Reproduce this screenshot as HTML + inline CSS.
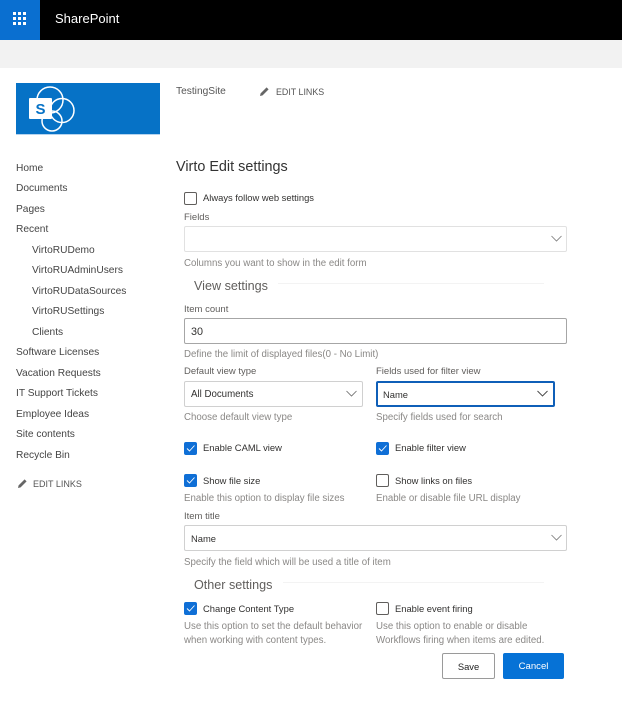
<!DOCTYPE html>
<html><head><meta charset="utf-8"><style>
html,body{margin:0;padding:0;background:#fff}
body{width:622px;height:712px;position:relative;overflow:hidden;font-family:"Liberation Sans",sans-serif;color:#333}
.t{position:absolute;white-space:nowrap;line-height:14px;font-size:10.2px}
.n{color:#444}
.h{color:#8a8886;font-size:9.7px}
.l{color:#605e5c;font-size:9.5px}
.c{color:#323130;font-size:9.4px}
.box{position:absolute;box-sizing:border-box;background:#fff;border:1px solid #c8c8c8;border-radius:2px}
.cb{position:absolute;box-sizing:border-box;width:13px;height:13px;border:1px solid #605e5c;border-radius:2px;background:#fff}
.cb.on{background:#0f6fd6;border-color:#0f6fd6}
.cb svg{position:absolute;left:0;top:0}
.chev{position:absolute}
.sec{color:#605e5c;font-size:12.6px;position:absolute;white-space:nowrap;line-height:16px}
.rule{position:absolute;height:1px;background:#f3f3f3}
</style></head><body>
<div style="position:absolute;left:0;top:0;width:622px;height:40px;background:#000"></div>
<div style="position:absolute;left:0;top:0;width:40px;height:40px;background:#0a6fd0"></div>
<svg style="position:absolute;left:13px;top:12px" width="14" height="14" fill="#fff"><rect x="0" y="0" width="3" height="3"/><rect x="5" y="0" width="3" height="3"/><rect x="10" y="0" width="3" height="3"/><rect x="0" y="5" width="3" height="3"/><rect x="5" y="5" width="3" height="3"/><rect x="10" y="5" width="3" height="3"/><rect x="0" y="10" width="3" height="3"/><rect x="5" y="10" width="3" height="3"/><rect x="10" y="10" width="3" height="3"/></svg>
<div class="t" style="left:55px;top:11px;font-size:13px;line-height:16px;color:#fff">SharePoint</div>
<div style="position:absolute;left:0;top:40px;width:622px;height:28px;background:#f2f2f2"></div>

<div style="position:absolute;left:16px;top:83px;width:144px;height:51px;background:#0672c6"></div>
<div style="position:absolute;left:16px;top:134px;width:144px;height:1px;background:#b5d3ee"></div>
<svg style="position:absolute;left:16px;top:83px" width="70" height="51" fill="none" stroke="#fff" stroke-width="1.5"><circle cx="34" cy="17" r="13"/><circle cx="46" cy="27.5" r="12"/><circle cx="36" cy="38" r="10"/><rect x="13" y="15" width="23" height="21" rx="1" fill="#fff" stroke="none"/><text x="19.5" y="31" font-family="Liberation Sans" font-size="15" font-weight="bold" fill="#0672c6" stroke="none">S</text></svg>
<div class="t" style="left:176px;top:85px;color:#555">TestingSite</div>
<svg style="position:absolute;left:259px;top:86px" width="11" height="11" fill="#666"><path d="M1 10 L1.6 7.4 L7.6 1.4 L9.6 3.4 L3.6 9.4 Z"/></svg>
<div class="t" style="left:276px;top:85px;color:#555;font-size:8.9px">EDIT LINKS</div>

<div class="t n" style="left:16px;top:162px">Home</div>
<div class="t n" style="left:16px;top:182px">Documents</div>
<div class="t n" style="left:16px;top:203px">Pages</div>
<div class="t n" style="left:16px;top:223px">Recent</div>
<div class="t n" style="left:32px;top:244px">VirtoRUDemo</div>
<div class="t n" style="left:32px;top:264px">VirtoRUAdminUsers</div>
<div class="t n" style="left:32px;top:285px">VirtoRUDataSources</div>
<div class="t n" style="left:32px;top:305px">VirtoRUSettings</div>
<div class="t n" style="left:32px;top:326px">Clients</div>
<div class="t n" style="left:16px;top:346px">Software Licenses</div>
<div class="t n" style="left:16px;top:367px">Vacation Requests</div>
<div class="t n" style="left:16px;top:387px">IT Support Tickets</div>
<div class="t n" style="left:16px;top:408px">Employee Ideas</div>
<div class="t n" style="left:16px;top:428px">Site contents</div>
<div class="t n" style="left:16px;top:449px">Recycle Bin</div>
<svg style="position:absolute;left:17px;top:478px" width="11" height="11" fill="#666"><path d="M1 10 L1.6 7.4 L7.6 1.4 L9.6 3.4 L3.6 9.4 Z"/></svg>
<div class="t" style="left:33px;top:477px;color:#555;font-size:9px">EDIT LINKS</div>

<div class="t" style="left:176px;top:158px;font-size:14.4px;line-height:18px;color:#333">Virto Edit settings</div>

<div class="cb" style="left:184px;top:192px"></div>
<div class="t c" style="left:203px;top:191px">Always follow web settings</div>
<div class="t l" style="left:184px;top:211px">Fields</div>
<div class="box" style="left:184px;top:226px;width:383px;height:26px;border-color:#e1e1e1"></div>
<svg class="chev" style="left:551px;top:235px" width="12" height="8" fill="none" stroke="#777" stroke-width=".8"><path d="M.5 1 L5.5 6 L10.5 1"/></svg>
<div class="t h" style="left:184px;top:257px">Columns you want to show in the edit form</div>

<div class="sec" style="left:194px;top:278px">View settings</div>
<div class="rule" style="left:278px;top:283px;width:266px"></div>

<div class="t l" style="left:184px;top:303px">Item count</div>
<div class="box" style="left:184px;top:318px;width:383px;height:26px;border-color:#a6a6a6"></div>
<div class="t" style="left:191px;top:325px;font-size:10.8px;color:#323130">30</div>
<div class="t h" style="left:184px;top:348px">Define the limit of displayed files(0 - No Limit)</div>

<div class="t l" style="left:184px;top:365px">Default view type</div>
<div class="box" style="left:184px;top:381px;width:179px;height:26px;border-color:#d0d0d0"></div>
<div class="t" style="left:191px;top:388px;font-size:9.7px;color:#323130">All Documents</div>
<svg class="chev" style="left:346px;top:390px" width="12" height="8" fill="none" stroke="#666" stroke-width=".8"><path d="M.5 1 L5.5 6 L10.5 1"/></svg>
<div class="t l" style="left:376px;top:365px">Fields used for filter view</div>
<div class="box" style="left:376px;top:381px;width:179px;height:26px;border:2px solid #0f5fb8"></div>
<div class="t" style="left:383px;top:388px;font-size:9.4px;color:#323130">Name</div>
<svg class="chev" style="left:537px;top:390px" width="12" height="8" fill="none" stroke="#444" stroke-width=".9"><path d="M.5 1 L5.5 6 L10.5 1"/></svg>
<div class="t h" style="left:184px;top:411px">Choose default view type</div>
<div class="t h" style="left:376px;top:411px">Specify fields used for search</div>

<div class="cb on" style="left:184px;top:442px"><svg width="11" height="11" fill="none" stroke="#fff" stroke-width=".9"><path d="M2 5.5 L4.5 8 L9.5 2.5"/></svg></div>
<div class="t c" style="left:203px;top:441px">Enable CAML view</div>
<div class="cb on" style="left:376px;top:442px"><svg width="11" height="11" fill="none" stroke="#fff" stroke-width=".9"><path d="M2 5.5 L4.5 8 L9.5 2.5"/></svg></div>
<div class="t c" style="left:395px;top:441px">Enable filter view</div>

<div class="cb on" style="left:184px;top:474px"><svg width="11" height="11" fill="none" stroke="#fff" stroke-width=".9"><path d="M2 5.5 L4.5 8 L9.5 2.5"/></svg></div>
<div class="t c" style="left:203px;top:474px">Show file size</div>
<div class="cb" style="left:376px;top:474px"></div>
<div class="t c" style="left:395px;top:474px">Show links on files</div>
<div class="t h" style="left:184px;top:492px">Enable this option to display file sizes</div>
<div class="t h" style="left:376px;top:492px">Enable or disable file URL display</div>

<div class="t l" style="left:184px;top:510px">Item title</div>
<div class="box" style="left:184px;top:525px;width:383px;height:26px;border-color:#d0d0d0"></div>
<div class="t" style="left:191px;top:532px;font-size:9.4px;color:#323130">Name</div>
<svg class="chev" style="left:551px;top:534px" width="12" height="8" fill="none" stroke="#777" stroke-width=".8"><path d="M.5 1 L5.5 6 L10.5 1"/></svg>
<div class="t h" style="left:184px;top:556px">Specify the field which will be used a title of item</div>

<div class="sec" style="left:194px;top:577px">Other settings</div>
<div class="rule" style="left:283px;top:582px;width:261px"></div>

<div class="cb on" style="left:184px;top:602px"><svg width="11" height="11" fill="none" stroke="#fff" stroke-width=".9"><path d="M2 5.5 L4.5 8 L9.5 2.5"/></svg></div>
<div class="t c" style="left:203px;top:602px">Change Content Type</div>
<div class="cb" style="left:376px;top:602px"></div>
<div class="t c" style="left:395px;top:602px">Enable event firing</div>
<div class="t h" style="left:184px;top:620px;line-height:13.5px">Use this option to set the default behavior<br>when working with content types.</div>
<div class="t h" style="left:376px;top:620px;line-height:13.5px">Use this option to enable or disable<br>Workflows firing when items are edited.</div>

<div class="box" style="left:442px;top:653px;width:53px;height:26px;border-color:#9a9a9a"></div>
<div class="t" style="left:442px;top:660px;width:53px;text-align:center;font-size:9.4px;color:#222">Save</div>
<div style="position:absolute;left:503px;top:653px;width:61px;height:26px;background:#0672d6;border-radius:2px"></div>
<div class="t" style="left:503px;top:660px;width:61px;text-align:center;font-size:9.6px;color:#fff">Cancel</div>
</body></html>
